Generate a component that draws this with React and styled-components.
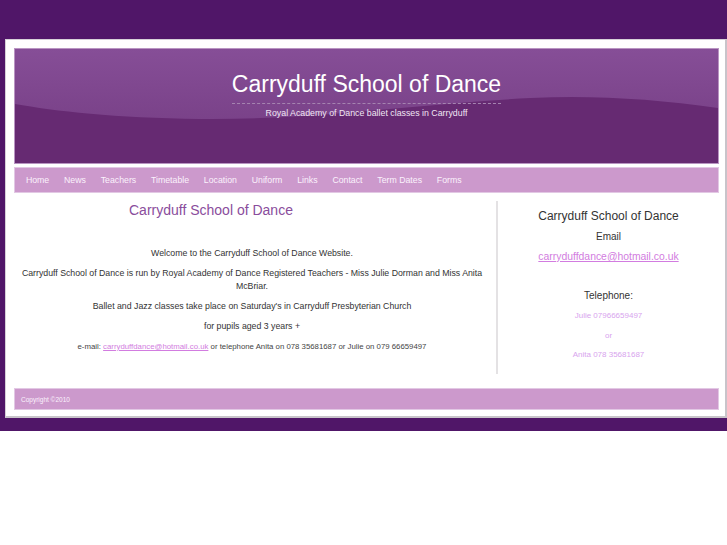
import React from 'react';
import styled, { createGlobalStyle } from 'styled-components';

const purple = '#501668';
const lilac = '#cc99cc';

const GlobalStyle = createGlobalStyle`
  html, body {
    margin: 0;
    padding: 0;
    background: #ffffff;
    font-family: 'Liberation Sans', Arial, sans-serif;
  }
`;

const Backdrop = styled.div`
  background: ${purple};
  padding: 39px 0 13px 5px;
`;

const Sheet = styled.div`
  background: #ffffff;
  border-top: 1px solid #d6d0d8;
  border-left: 1px solid #d6d0d8;
  border-right: 2px solid #c8c4ca;
  border-bottom: 2px solid #c8c4ca;
  padding: 8px 6px 6px 8px;
  display: flex;
  flex-direction: column;
`;

const Header = styled.header`
  position: relative;
  height: 114px;
  background: #662a72;
  border: 1px solid #b994c2;
  overflow: hidden;
  display: flex;
  flex-direction: column;
  align-items: center;
`;

const Wave = styled.svg`
  position: absolute;
  inset: 0;
  width: 100%;
  height: 100%;
`;

const Title = styled.h1`
  position: relative;
  margin: 22px 0 0;
  padding-bottom: 5px;
  font-size: 23px;
  font-weight: normal;
  color: #ffffff;
  border-bottom: 1px dashed #a583b0;
`;

const Tagline = styled.p`
  position: relative;
  margin: 4px 0 0;
  font-size: 8.8px;
  color: #f1e6f4;
`;

const Nav = styled.nav`
  margin-top: 3px;
  height: 24px;
  background: ${lilac};
  border: 1px solid #e2c8e4;
  display: flex;
  align-items: center;
  padding-left: 3.5px;
`;

const NavLink = styled.a`
  padding: 0 7.4px;
  font-size: 8.75px;
  color: #fbf2fc;
  text-decoration: none;
`;

const Body = styled.div`
  display: flex;
  padding: 8px 0 14px;
`;

const Main = styled.section`
  width: 484px;
  height: 173px;
  padding-right: 6px;
  border-right: 2px solid #e4e2e4;
  box-sizing: border-box;
  text-align: center;
  color: #333333;
`;

const MainTitle = styled.h2`
  margin: 1px 0 29px;
  padding-left: 115px;
  text-align: left;
  font-size: 14px;
  font-weight: normal;
  color: #8a4d9c;
`;

const Para = styled.p`
  margin: 0 0 7px;
  font-size: 8.75px;
  line-height: 13px;
`;

const Small = styled(Para)`
  font-size: 7.8px;
  color: #444444;
`;

const PinkLink = styled.a`
  color: #d27ce0;
  text-decoration: underline;
`;

const Side = styled.aside`
  flex: 1;
  text-align: center;
  color: #333333;
  padding-top: 8px;
`;

const SideTitle = styled.div`
  font-size: 12px;
  line-height: 14px;
`;

const SideLabel = styled.div`
  font-size: 10px;
  line-height: 12px;
  margin-top: ${p => p.$top}px;
`;

const SideEmail = styled.a`
  display: inline-block;
  margin-top: 8px;
  font-size: 10.4px;
  color: #d27ce0;
  text-decoration: underline;
`;

const Phone = styled.div`
  font-size: 8px;
  line-height: 10.5px;
  color: #d8a4ee;
  margin-top: 9px;
`;

const Footer = styled.footer`
  height: 20px;
  background: ${lilac};
  border: 1px solid #e2c8e4;
  display: flex;
  align-items: center;
  padding-left: 6px;
  font-size: 6.5px;
  color: #fbf2fc;
`;

const links = ['Home', 'News', 'Teachers', 'Timetable', 'Location', 'Uniform', 'Links', 'Contact', 'Term Dates', 'Forms'];

export default function App() {
  return (
    <>
      <GlobalStyle />
      <Backdrop>
        <Sheet>
          <Header>
            <Wave viewBox="0 0 704 114" preserveAspectRatio="none">
              <defs>
                <linearGradient id="sky" x1="0" y1="0" x2="0" y2="1">
                  <stop offset="0" stopColor="#864e97" />
                  <stop offset="1" stopColor="#7a4289" />
                </linearGradient>
              </defs>
              <path
                d="M0 0 H704 V59 C640 50 580 46 516 49 C400 55 300 71 186 70 C100 69 40 62 0 55 Z"
                fill="url(#sky)"
              />
            </Wave>
            <Title>Carryduff School of Dance</Title>
            <Tagline>Royal Academy of Dance ballet classes in Carryduff</Tagline>
          </Header>
          <Nav>
            {links.map(l => (
              <NavLink key={l} href="#">{l}</NavLink>
            ))}
          </Nav>
          <Body>
            <Main>
              <MainTitle>Carryduff School of Dance</MainTitle>
              <Para>Welcome to the Carryduff School of Dance Website.</Para>
              <Para>
                Carryduff School of Dance is run by Royal Academy of Dance Registered Teachers - Miss Julie Dorman and Miss Anita McBriar.
              </Para>
              <Para>Ballet and Jazz classes take place on Saturday's in Carryduff Presbyterian Church</Para>
              <Para>for pupils aged 3 years +</Para>
              <Small>
                e-mail: <PinkLink href="#">carryduffdance@hotmail.co.uk</PinkLink> or telephone Anita on 078 35681687 or Julie on 079 66659497
              </Small>
            </Main>
            <Side>
              <SideTitle>Carryduff School of Dance</SideTitle>
              <SideLabel $top={8}>Email</SideLabel>
              <SideEmail href="#">carryduffdance@hotmail.co.uk</SideEmail>
              <SideLabel $top={26}>Telephone:</SideLabel>
              <Phone>Julie 07966659497</Phone>
              <Phone>or</Phone>
              <Phone>Anita 078 35681687</Phone>
            </Side>
          </Body>
          <Footer>Copyright ©2010</Footer>
        </Sheet>
      </Backdrop>
    </>
  );
}
